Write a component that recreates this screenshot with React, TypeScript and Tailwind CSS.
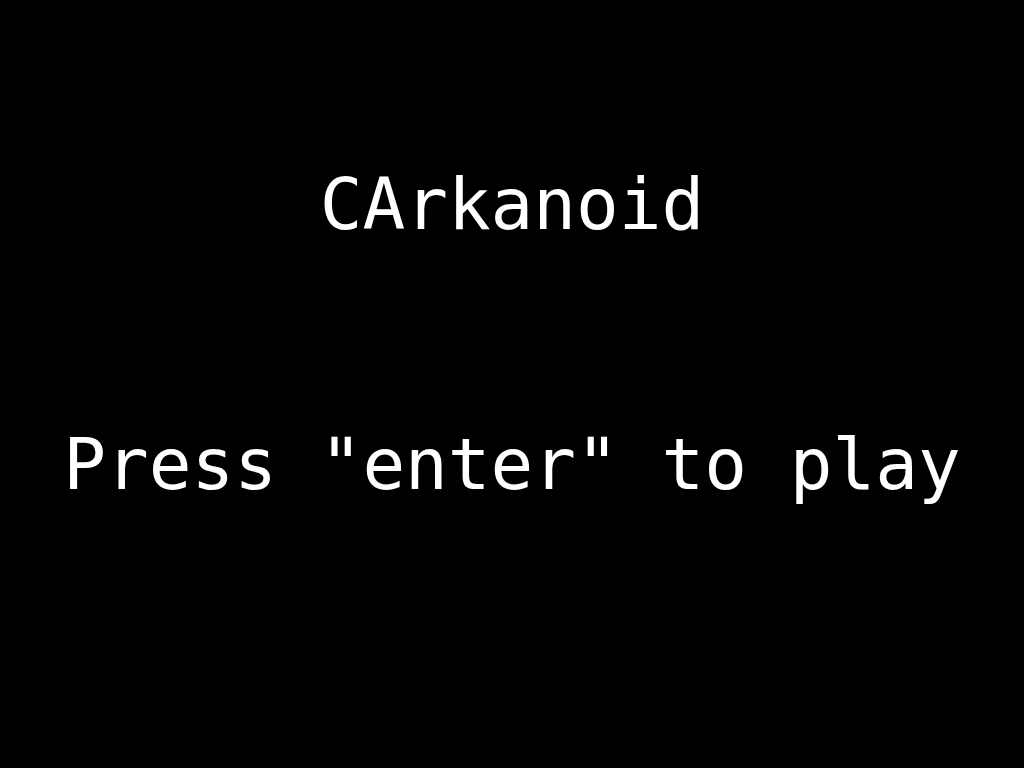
export default function App() {
  return (
    <div className="flex h-screen w-full flex-col items-center gap-[189px] bg-black pt-[169px] font-['DejaVu_Sans_Mono',monospace] text-[71px] leading-none text-white">
      <h1 className="whitespace-pre">CArkanoid</h1>
      <p className="whitespace-pre">Press "enter" to play</p>
    </div>
  );
}
